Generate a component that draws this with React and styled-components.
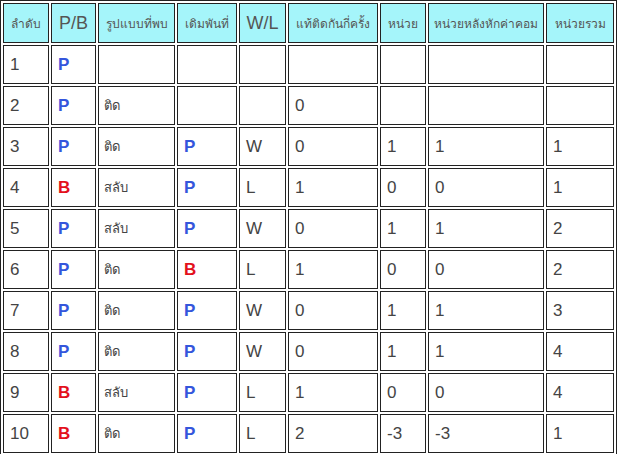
import styled, { createGlobalStyle } from "styled-components";

const GlobalStyle = createGlobalStyle`
  body {
    margin: 0;
    background: #fff;
    font-family: "Liberation Sans", Arial, sans-serif;
  }
`;

const columns = [
  { title: "ลำดับ", width: 46 },
  { title: "P/B", width: 45, latin: true },
  { title: "รูปแบบที่พบ", width: 77 },
  { title: "เดิมพันที่", width: 60 },
  { title: "W/L", width: 47, latin: true },
  { title: "แท้ติดกันกี่ครั้ง", width: 90 },
  { title: "หน่วย", width: 46 },
  { title: "หน่วยหลังหักค่าคอม", width: 116 },
  { title: "หน่วยรวม", width: 68 },
];

const rows = [
  ["1", "P", "", "", "", "", "", "", ""],
  ["2", "P", "ติด", "", "", "0", "", "", ""],
  ["3", "P", "ติด", "P", "W", "0", "1", "1", "1"],
  ["4", "B", "สลับ", "P", "L", "1", "0", "0", "1"],
  ["5", "P", "สลับ", "P", "W", "0", "1", "1", "2"],
  ["6", "P", "ติด", "B", "L", "1", "0", "0", "2"],
  ["7", "P", "ติด", "P", "W", "0", "1", "1", "3"],
  ["8", "P", "ติด", "P", "W", "0", "1", "1", "4"],
  ["9", "B", "สลับ", "P", "L", "1", "0", "0", "4"],
  ["10", "B", "ติด", "P", "L", "2", "-3", "-3", "1"],
];

const isThai = (s) => /[\u0E00-\u0E7F]/.test(s);

export default function App() {
  return (
    <>
      <GlobalStyle />
      <Table>
        <colgroup>
          {columns.map((c) => (
            <col key={c.title} style={{ width: c.width }} />
          ))}
        </colgroup>
        <thead>
          <tr>
            {columns.map((c) => (
              <HeadCell key={c.title} $latin={c.latin}>
                {c.title}
              </HeadCell>
            ))}
          </tr>
        </thead>
        <tbody>
          {rows.map((row) => (
            <tr key={row[0]}>
              {row.map((value, i) => {
                if (value === "P" || value === "B") {
                  return (
                    <Cell key={i}>
                      <Side $side={value}>{value}</Side>
                    </Cell>
                  );
                }
                return (
                  <Cell key={i} $thai={isThai(value)}>
                    {value}
                  </Cell>
                );
              })}
            </tr>
          ))}
        </tbody>
      </Table>
    </>
  );
}

const Table = styled.table`
  table-layout: fixed;
  width: 617px;
  border: 1px solid #222;
  border-spacing: 2px;
  border-collapse: separate;
`;

const HeadCell = styled.th`
  height: 40px;
  box-sizing: border-box;
  padding: 0 2px;
  border: 1px solid #222;
  background: #a5f5fa;
  color: #555;
  font-weight: normal;
  text-align: center;
  white-space: nowrap;
  font-size: ${(p) => (p.$latin ? "18px" : "12px")};
  font-family: ${(p) =>
    p.$latin ? `"Liberation Sans", Arial, sans-serif` : `Tahoma, "Noto Sans", sans-serif`};
`;

const Cell = styled.td`
  height: 39px;
  box-sizing: border-box;
  padding: 0 ${(p) => (p.$thai ? "5px" : "6px")};
  border: 1px solid #222;
  color: #444;
  text-align: left;
  vertical-align: middle;
  white-space: nowrap;
  font-size: ${(p) => (p.$thai ? "13px" : "17px")};
  font-family: ${(p) =>
    p.$thai ? `Tahoma, "Noto Sans", sans-serif` : `"Liberation Sans", Arial, sans-serif`};
`;

const Side = styled.span`
  font-weight: bold;
  font-size: 17px;
  color: ${(p) => (p.$side === "P" ? "#3456dc" : "#e3101c")};
`;
